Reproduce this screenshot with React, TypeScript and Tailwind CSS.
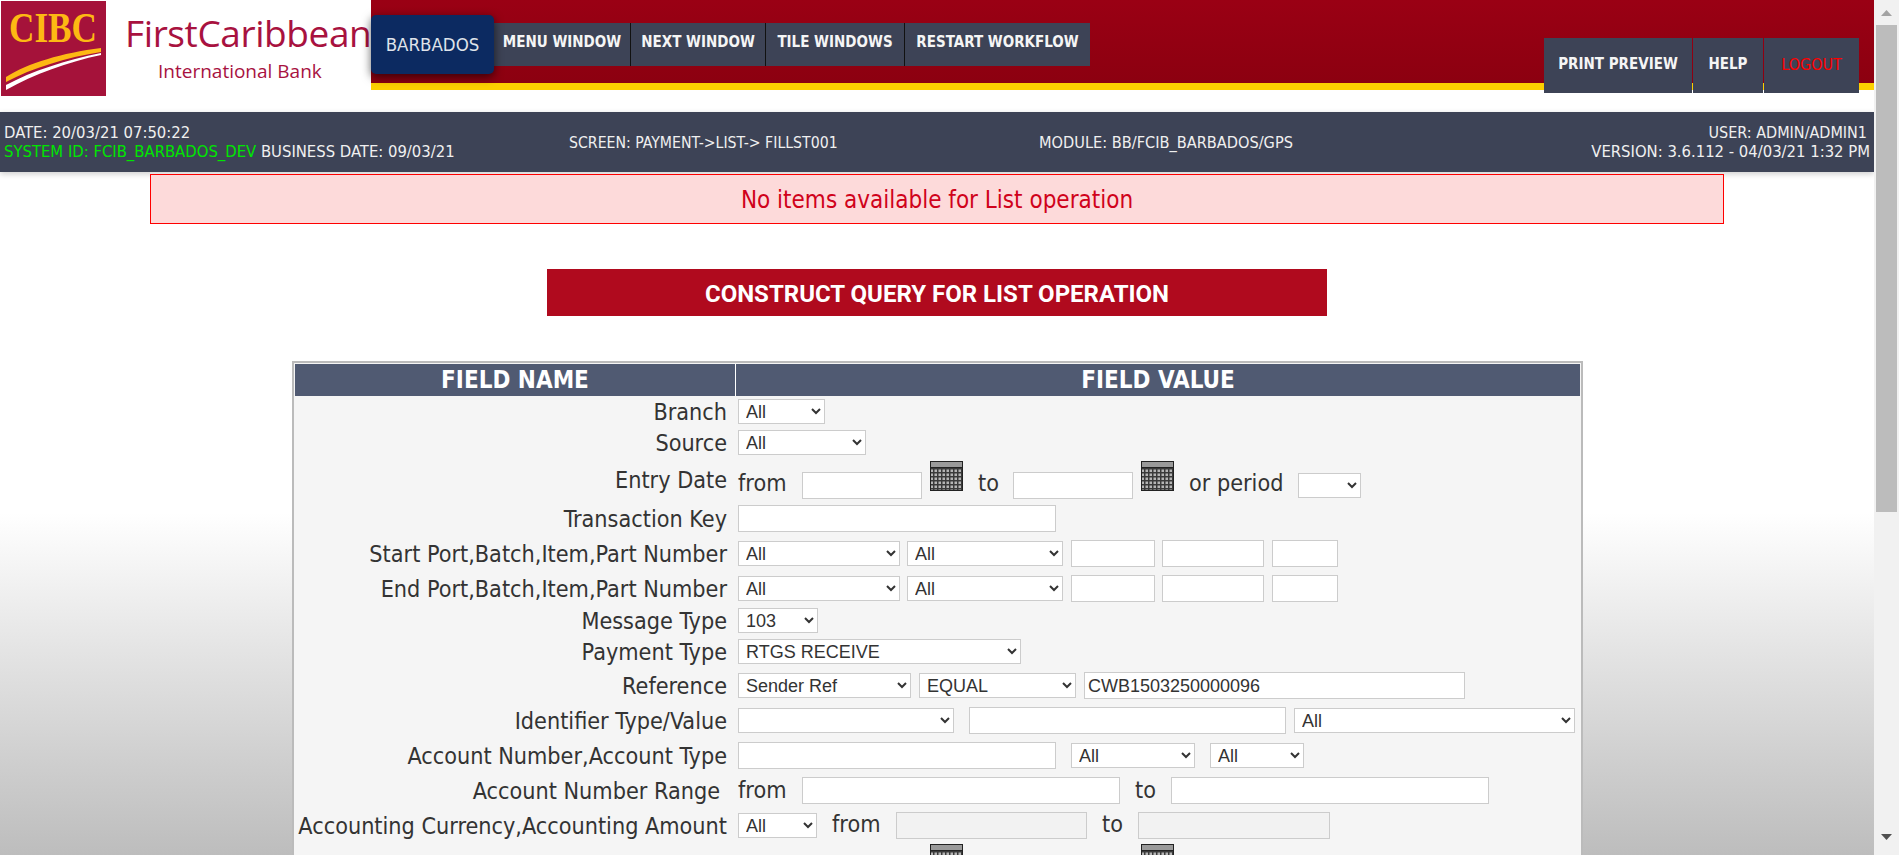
import React from 'react';

const uiFont = "font-['DejaVu_Sans_Condensed','DejaVu_Sans',sans-serif]";

const Sel: React.FC<{ w: string; value?: string; className?: string }> = ({ w, value = 'All', className = '' }) => (
  <select
    defaultValue={value}
    className={`${w} h-[25px] shrink-0 border border-[#ccc] bg-white pl-[3px] font-['Liberation_Sans',sans-serif] text-[18px] text-[#333] ${className}`}
  >
    <option value={value}>{value}</option>
  </select>
);

const Inp: React.FC<{ w: string; value?: string; disabled?: boolean; className?: string }> = ({ w, value = '', disabled, className = '' }) => (
  <input
    readOnly
    value={value}
    className={`${w} h-[27px] shrink-0 border border-[#ccc] px-[3px] font-['Liberation_Sans',sans-serif] text-[18px] text-[#333] ${disabled ? 'bg-[#f2f2f2]' : 'bg-white'} ${className}`}
  />
);

const Calendar: React.FC<{ className?: string }> = ({ className = '' }) => (
  <svg width="33" height="30" viewBox="0 0 33 30" className={`shrink-0 ${className}`}>
    <defs>
      <pattern id="cells" width="4" height="4" patternUnits="userSpaceOnUse">
        <rect width="4" height="4" fill="#3a3a3a" />
        <rect x="0.5" y="0.5" width="2.5" height="2.5" fill="#b5b5b5" />
      </pattern>
    </defs>
    <rect width="33" height="30" fill="#222" />
    <rect x="1" y="1" width="31" height="5" fill="#9a9a9a" />
    <rect x="1" y="7" width="31" height="22" fill="url(#cells)" />
  </svg>
);

const Row: React.FC<{ h: string; label: string; labelClass?: string; children: React.ReactNode }> = ({ h, label, labelClass = 'pr-[8px]', children }) => (
  <div className={`flex ${h} items-center`}>
    <div className={`w-[440px] shrink-0 whitespace-nowrap text-right ${labelClass}`}>{label}</div>
    <div className="flex flex-1 items-center pl-[3px]">{children}</div>
  </div>
);

const Logo = () => (
  <div className="flex h-[96px] w-[371px] shrink-0 bg-white">
    <svg width="106" height="96" viewBox="0 0 106 96" className="shrink-0 overflow-visible">
      <rect x="1" y="1" width="105" height="95" fill="#a5123a" />
      <text x="53" y="42" textAnchor="middle" fontFamily="Liberation Serif" fontWeight="bold" fontSize="42" fill="#fdb913" textLength="88" lengthAdjust="spacingAndGlyphs">CIBC</text>
      <path d="M6 77 C28 63 62 53 101 48 L101 52 C68 57 32 68 6 82 Z" fill="#fdb913" />
      <path d="M6 85 C32 71 66 60 101 53 L101 55 C68 62 34 74 6 90 Z" fill="#fff" />
    </svg>
    <div className="w-[265px] overflow-hidden pl-[19px] pt-[8px] text-[#a8123f]">
      <div className="whitespace-nowrap font-['Open_Sans',sans-serif] text-[37px] leading-[50px] tracking-[-0.4px]">FirstCaribbean</div>
      <div className="whitespace-nowrap pl-[33px] font-['Open_Sans',sans-serif] text-[19px] leading-[26px]">International Bank</div>
    </div>
  </div>
);

const menuItem = 'flex h-full items-center whitespace-nowrap font-bold text-[#f5f5f5]';

export default function App() {
  return (
    <div className={`flex h-[855px] w-[1899px] overflow-hidden bg-gradient-to-b from-white from-60% to-[#bdbdbd] ${uiFont}`}>
      <div className="w-[1874px] shrink-0">
        <header className="flex items-start">
          <Logo />
          <div className="flex h-[90px] flex-1 items-start justify-between border-b-[7px] border-[#fdd000] bg-gradient-to-b from-[#9a0014] to-[#8c0010]">
            <div className="flex items-start pt-[15px]">
              <div className="z-10 flex h-[59px] w-[123px] items-center justify-center rounded-[5px] bg-[#0c2a61] text-[18.5px] text-[#dfe3ea] shadow-[0_3px_10px_rgba(0,0,0,0.6)]">BARBADOS</div>
              <nav className="mt-[8px] flex h-[43px] bg-[#3d4356] text-[15px]">
                <div className={`${menuItem} w-[137px] justify-center border-r border-[#111] pb-[4px]`}>MENU WINDOW</div>
                <div className={`${menuItem} w-[135px] justify-center border-r border-[#111] pb-[4px]`}>NEXT WINDOW</div>
                <div className={`${menuItem} w-[139px] justify-center border-r border-[#111] pb-[4px]`}>TILE WINDOWS</div>
                <div className={`${menuItem} w-[185px] justify-center pb-[4px]`}>RESTART WORKFLOW</div>
              </nav>
            </div>
            <div className="mr-[15px] mt-[38px] flex h-[55px] gap-[1px] text-[15px]">
              <div className={`${menuItem} w-[148px] justify-center bg-[#3d4356] pb-[2px]`}>PRINT PREVIEW</div>
              <div className={`${menuItem} w-[70px] justify-center bg-[#3d4356] pb-[2px]`}>HELP</div>
              <div className="flex h-full w-[95px] items-center justify-center bg-[#3d4356] pb-[2px] text-[16px] text-[#f00]">LOGOUT</div>
            </div>
          </div>
        </header>

        <div className="mt-[16px] flex h-[60px] items-center justify-between bg-[#3d4356] pl-[4px] pr-[4px] text-[16.5px] leading-[19px] text-[#f0f0f0] shadow-[0_2px_6px_rgba(0,0,0,0.2)]">
          <div className="w-[565px] whitespace-nowrap">
            <div>DATE: 20/03/21 07:50:22</div>
            <div><span className="text-[#00e600]">SYSTEM ID: FCIB_BARBADOS_DEV</span> BUSINESS DATE: 09/03/21</div>
          </div>
          <div className="w-[470px] whitespace-nowrap text-[15.7px]">SCREEN: PAYMENT-&gt;LIST-&gt; FILLST001</div>
          <div className="flex-1 whitespace-nowrap text-[16.2px]">MODULE: BB/FCIB_BARBADOS/GPS</div>
          <div className="whitespace-nowrap text-right">
            <div className="pr-[3px] text-[16px]">USER: ADMIN/ADMIN1</div>
            <div>VERSION: 3.6.112 - 04/03/21 1:32 PM</div>
          </div>
        </div>

        <div className="ml-[150px] mt-[2px] flex h-[50px] w-[1574px] items-center justify-center border border-[#f00] bg-[#fddada] pt-[1px] text-[24px] text-[#d0021b]">
          No items available for List operation
        </div>

        <h1 className="ml-[547px] mt-[45px] flex h-[47px] w-[780px] items-center justify-center bg-[#b00a1e] pt-[2px] font-['Roboto',sans-serif] text-[24px] font-bold text-white">
          CONSTRUCT QUERY FOR LIST OPERATION
        </h1>

        <div className="ml-[292px] mt-[45px] w-[1291px] border-2 border-[#bbb] bg-[#f5f5f5] px-[1px] pt-[1px] text-[23.2px] leading-[28px] text-[#333]">
          <div className="flex h-[32px] bg-[#505a72] text-[24px] font-bold leading-none text-white">
            <div className="flex w-[441px] items-center justify-center border-r border-white">FIELD NAME</div>
            <div className="flex flex-1 items-center justify-center">FIELD VALUE</div>
          </div>
          <Row h="h-[31px]" label="Branch"><Sel w="w-[87px]" /></Row>
          <Row h="h-[31px]" label="Source"><Sel w="w-[128px]" /></Row>
          <Row h="h-[44px]" label="Entry Date">
            <span className="mt-[6px] w-[64px] shrink-0">from</span>
            <Inp w="w-[120px]" className="mt-[11px]" />
            <Calendar className="mb-[8px] ml-[8px]" />
            <span className="ml-[15px] mt-[6px] w-[35px] shrink-0">to</span>
            <Inp w="w-[120px]" className="mt-[11px]" />
            <Calendar className="mb-[8px] ml-[8px]" />
            <span className="ml-[15px] mt-[6px] w-[109px] shrink-0 whitespace-nowrap">or period</span>
            <Sel w="w-[63px]" value="" className="mt-[10px]" />
          </Row>
          <Row h="h-[33px]" label="Transaction Key"><Inp w="w-[318px]" /></Row>
          <Row h="h-[37px]" label="Start Port,Batch,Item,Part Number">
            <Sel w="w-[162px]" />
            <Sel w="w-[156px]" className="ml-[7px]" />
            <Inp w="w-[84px]" className="ml-[8px]" />
            <Inp w="w-[102px]" className="ml-[7px]" />
            <Inp w="w-[66px]" className="ml-[8px]" />
          </Row>
          <Row h="h-[33px]" label="End Port,Batch,Item,Part Number">
            <Sel w="w-[162px]" />
            <Sel w="w-[156px]" className="ml-[7px]" />
            <Inp w="w-[84px]" className="ml-[8px]" />
            <Inp w="w-[102px]" className="ml-[7px]" />
            <Inp w="w-[66px]" className="ml-[8px]" />
          </Row>
          <Row h="h-[31px]" label="Message Type"><Sel w="w-[80px]" value="103" /></Row>
          <Row h="h-[31px]" label="Payment Type"><Sel w="w-[283px]" value="RTGS RECEIVE" /></Row>
          <Row h="h-[37px]" label="Reference">
            <Sel w="w-[173px]" value="Sender Ref" />
            <Sel w="w-[157px]" value="EQUAL" className="ml-[8px]" />
            <Inp w="w-[381px]" value="CWB1503250000096" className="ml-[8px]" />
          </Row>
          <Row h="h-[33px]" label="Identifier Type/Value">
            <Sel w="w-[216px]" value="" />
            <Inp w="w-[317px]" className="ml-[15px]" />
            <Sel w="w-[281px]" className="ml-[8px]" />
          </Row>
          <Row h="h-[37px]" label="Account Number,Account Type">
            <Inp w="w-[318px]" />
            <Sel w="w-[124px]" className="ml-[15px]" />
            <Sel w="w-[94px]" className="ml-[15px]" />
          </Row>
          <Row h="h-[33px]" label="Account Number Range" labelClass="pr-[15px]">
            <span className="mb-[2px] w-[64px] shrink-0">from</span>
            <Inp w="w-[318px]" />
            <span className="mb-[2px] ml-[15px] w-[36px] shrink-0">to</span>
            <Inp w="w-[318px]" />
          </Row>
          <Row h="h-[37px]" label="Accounting Currency,Accounting Amount">
            <Sel w="w-[79px]" />
            <span className="mb-[4px] ml-[15px] w-[64px] shrink-0">from</span>
            <Inp w="w-[191px]" disabled />
            <span className="mb-[4px] ml-[15px] w-[36px] shrink-0">to</span>
            <Inp w="w-[192px]" disabled />
          </Row>
          <div className="flex h-[30px]">
            <Calendar className="ml-[635px]" />
            <Calendar className="ml-[178px]" />
          </div>
        </div>
      </div>

      {/* scrollbar, the page itself does not scroll in the screenshot */}
      <div className="flex h-full w-[25px] shrink-0 flex-col bg-[#f1f1f1]">
        <div className="flex h-[25px] items-center justify-center">
          <svg width="11" height="6" viewBox="0 0 11 6"><path d="M5.5 0 L11 6 L0 6 Z" fill="#a3a3a3" /></svg>
        </div>
        <div className="ml-[2px] mr-[2px] h-[487px] bg-[#bcbcbc]" />
        <div className="flex-1" />
        <div className="flex h-[25px] items-start justify-center pt-[4px]">
          <svg width="11" height="6" viewBox="0 0 11 6"><path d="M0 0 L11 0 L5.5 6 Z" fill="#505050" /></svg>
        </div>
      </div>
    </div>
  );
}
